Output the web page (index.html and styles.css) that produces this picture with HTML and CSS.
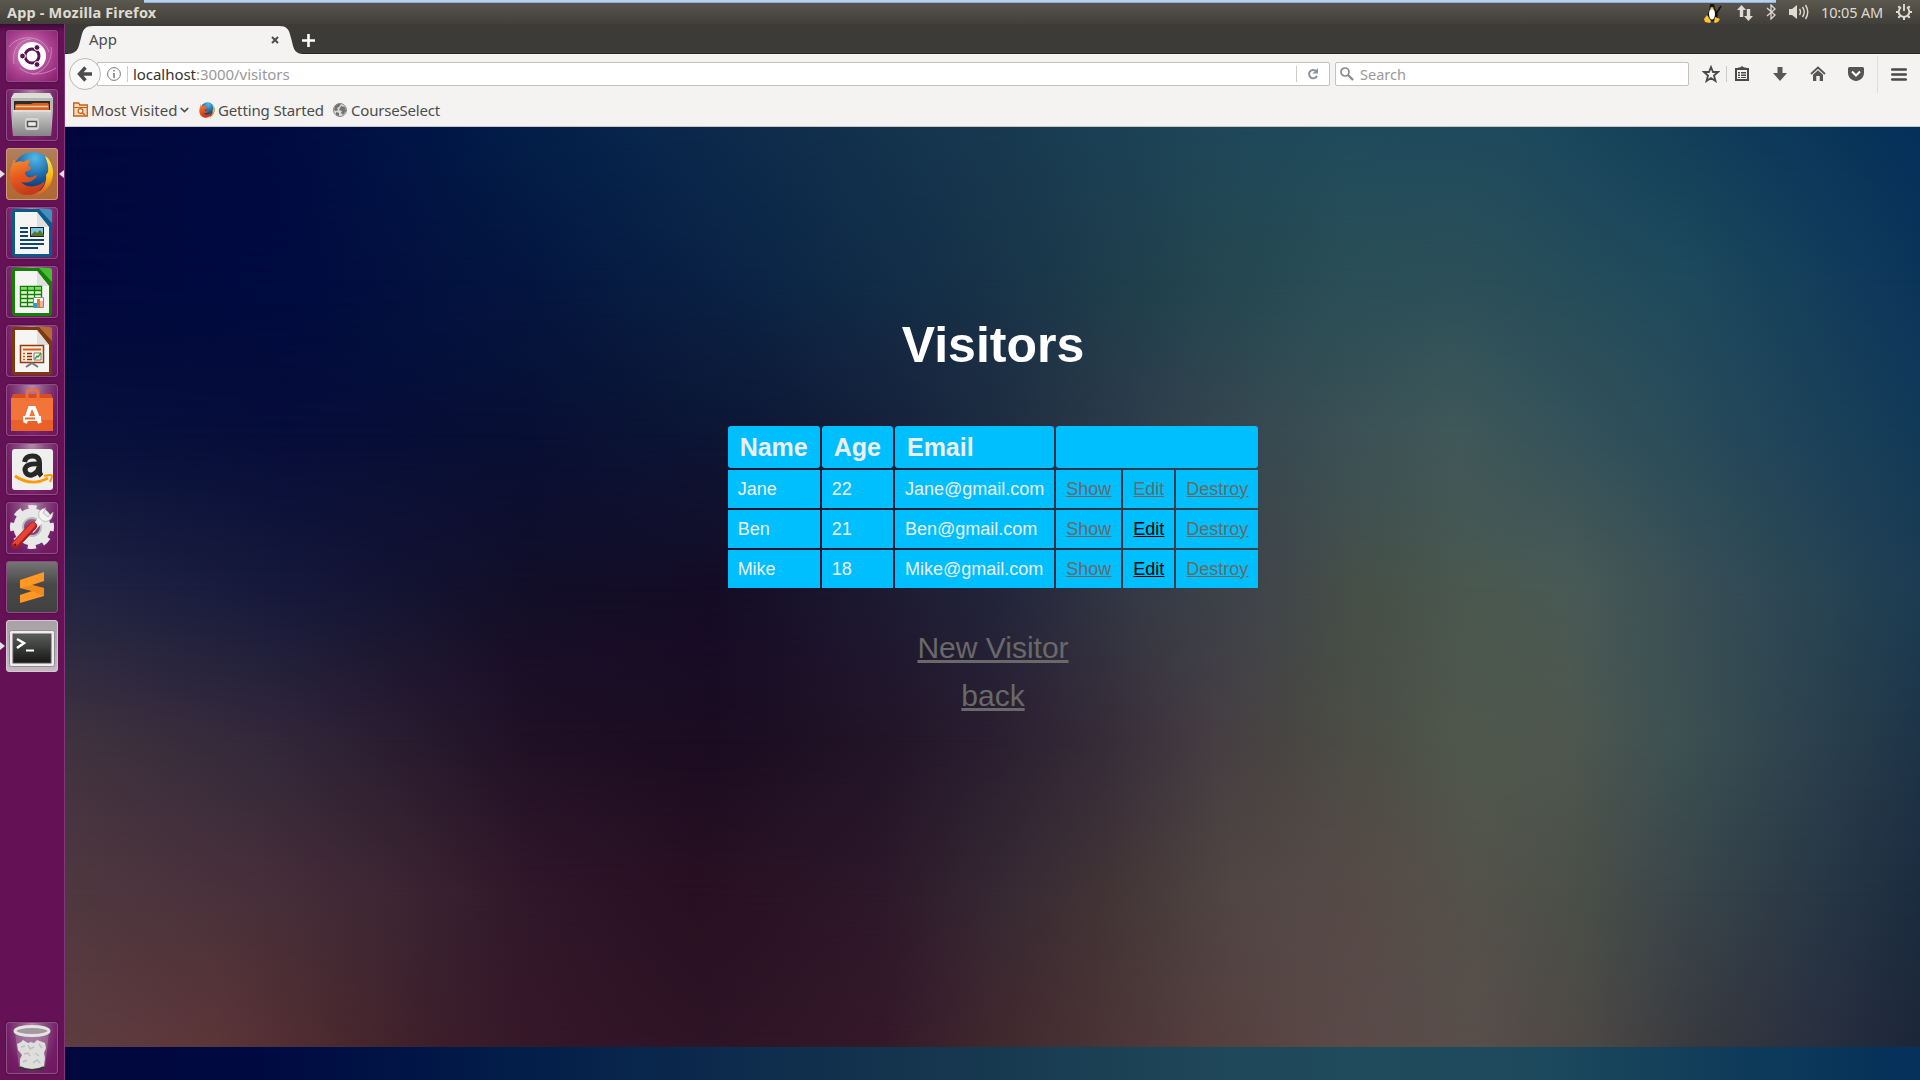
FILE: index.html
```html
<!DOCTYPE html>
<html lang="en">
<head>
<meta charset="utf-8">
<title>App</title>
<link rel="stylesheet" href="styles.css">
</head>
<body>
<div class="desktop">
  <header class="panel">
    <div class="panel-title">App - Mozilla Firefox</div>
    <div class="panel-strip"></div>
    <div class="indicators">
      <svg class="ind-tux" width="20" height="20" viewBox="0 0 18 20"><path d="M6 1h4l1 4 3 7-2 6H4l-1-5 2-5z" fill="#161616"/><ellipse cx="8" cy="11" rx="3" ry="5.500" fill="#fff"/><path d="M6 5l2-1 2 1-2 2zM0 16l3-4 4 6-1 2-5-1zM10 19l1-5 5 2-2 3-3 1z" fill="#fdc42c"/><path d="M12 11l5-8" stroke="#111" stroke-width="1.600"/></svg>
      <svg class="ind-net" width="16" height="16" viewBox="0 0 16 16" fill="#dfdbd2"><path d="M4.500 0L9 5H6.200v7H2.800V5H0zM11.500 16L7 11h2.800V4h3.400v7H16z"/></svg>
      <svg class="ind-bt" width="10" height="16" viewBox="0 0 10 16" fill="none" stroke="#dfdbd2" stroke-width="1.300"><path d="M1 4l8 7-4 4V1l4 4-8 7"/></svg>
      <svg class="ind-sound" width="20" height="16" viewBox="0 0 20 16"><path d="M0 5h3l5-4v14l-5-4H0z" fill="#dfdbd2"/><path d="M10.500 5q2 3 0 6M13.500 3q3.500 5 0 10M16.500 1q4.500 7 0 14" fill="none" stroke="#dfdbd2" stroke-width="1.400"/></svg>
      <span class="clock">10:05 AM</span>
      <svg class="ind-gear" width="16" height="16" viewBox="0 0 16 16" fill="none" stroke="#dfdbd2"><path d="M5 3.300a5.300 5.300 0 1 0 6 0" stroke-width="1.900"/><path d="M8 0v7" stroke-width="1.900"/><path d="M0 8h3M13 8h3M2.300 2.300l2 2M13.700 2.300l-2 2M2.300 13.700l2-2M13.700 13.700l-2-2M8 13v3" stroke-width="2"/></svg>
    </div>
  </header>

  <div class="workspace">
    <nav class="launcher">
      <div class="tile tile-dash"><svg width="52" height="52" viewBox="0 0 52 52"><g fill="none" stroke="#e7a9d9" stroke-width="1" opacity=".6"><path d="M3 17C12 4 37 4 43 22M45 17c2 12-6 26-19 27M8 34C6 20 12 10 25 9M14 38c10 9 24 7 36 0"/></g><circle cx="26" cy="26" r="14" fill="#fff"/><circle cx="26" cy="26" r="7" fill="none" stroke="#5a1453" stroke-width="3"/><path d="M26 26H18M26 26l5.500-9.500M26 26l5.500 9.500" stroke="#fff" stroke-width="0"/><path d="M31 13l-4 7M31 39l-4-7M13 26h8" stroke="#fff" stroke-width="0"/><g fill="#5a1453" stroke="#fff" stroke-width="1"><circle cx="16.500" cy="26" r="2.900"/><circle cx="31" cy="17.500" r="2.900"/><circle cx="31" cy="34.500" r="2.900"/></g></svg></div>
      <div class="tile"><svg width="52" height="52" viewBox="0 0 52 52"><defs><linearGradient id="cab" x2="0" y2="1"><stop stop-color="#d2d2d0"/><stop offset="1" stop-color="#858585"/></linearGradient></defs><path d="M8 4h36l3 5v13H5V9z" fill="#deded9"/><path d="M5 9h42v13l-2 25H7L5 22z" fill="#b8b8b5"/><path d="M8 12h36v11H8z" fill="#302a26"/><path d="M9 16l2-1h14l2-1h15l1 2v6H9z" fill="#d86027"/><path d="M10 17.500h32" stroke="#ffc891" stroke-width="1.500"/><path d="M7 21h38v26H7z" fill="url(#cab)"/><path d="M7 22h38" stroke="#ededed"/><rect x="19" y="29" width="14" height="12" rx="3" fill="#d6d6d4"/><rect x="21.500" y="32.500" width="9" height="5" fill="#eee" stroke="#555" stroke-width="1.500"/></svg></div>
      <div class="tile tile-firefox"><svg width="52" height="52" viewBox="0 0 52 52"><defs><linearGradient id="fox" x2=".3" y2="1"><stop stop-color="#f19632"/><stop offset=".5" stop-color="#e95a22"/><stop offset="1" stop-color="#c63b18"/></linearGradient><radialGradient id="globe" cx=".55" cy=".15" r=".9"><stop stop-color="#51bae8"/><stop offset=".6" stop-color="#14599c"/><stop offset="1" stop-color="#102555"/></radialGradient><linearGradient id="flame" x2=".1" y2="1"><stop stop-color="#fff06a"/><stop offset=".6" stop-color="#fdb813"/><stop offset="1" stop-color="#e85e1c"/></linearGradient></defs><circle cx="27" cy="24" r="20" fill="url(#globe)"/><path d="M39 8c5 3 9 11 8 19-1 11-9 19-18 20 8-5 12-12 11-20l2-3c1-6-1-11-3-16z" fill="url(#flame)"/><path d="M8 11l1 4c3-2 6-2 8-1l7-3-2 7 3 1-1 3-5 2c0 4 3 6 7 5l4-2c2 1 0 3-3 5-5 4-12 2-12 2 7 7 17 5 24-1-2 8-8 14-17 14C11 48 3 37 4 26c0-6 3-9 4-15z" fill="url(#fox)"/></svg></div>
      <div class="tile"><svg width="52" height="52" viewBox="0 0 52 52"><path d="M8 2h27l11 14v30q0 4-3 4H9q-3 0-3-4V4z" fill="#0b5a88"/><path d="M33 2h10q3 0 3 3v11z" fill="#3f91c2"/><path d="M9 5h22l12 15v27H9z" fill="#f5f5f4"/><path d="M31 5v15h12z" fill="#d5d5d5" opacity=".7"/><path d="M14 21h8M14 25h8M14 29h8M14 33h24M14 37h24M14 41h18" stroke="#10466d" stroke-width="2"/><rect x="24.500" y="20.500" width="13" height="9" fill="#79c5ed" stroke="#222"/><path d="M25 28l4-4 2 2 3-3 4 5v1H25z" fill="#57762b"/></svg></div>
      <div class="tile"><svg width="52" height="52" viewBox="0 0 52 52"><path d="M8 2h27l11 14v30q0 4-3 4H9q-3 0-3-4V4z" fill="#168006"/><path d="M33 2h10q3 0 3 3v11z" fill="#46bd32"/><path d="M9 5h22l12 15v27H9z" fill="#f5f5f4"/><path d="M31 5v15h12z" fill="#d5d5d5" opacity=".7"/><path d="M14.500 20.500h21v20h-21z" fill="#e7ffdd" stroke="#168006" stroke-width="1.400"/><path d="M15 21h20v3H15z" fill="#80dc6a"/><path d="M14 24.500h21M14 28.500h21M14 32.500h21M14 36.500h21M21.500 20v20M28.500 20v20" stroke="#168006" stroke-width="1.300"/><path d="M27.500 31.500h10v10h-10z" fill="#fff" stroke="#888"/><path d="M28 37h3v4h-3z" fill="#209ddb"/><path d="M31 33h3v8h-3z" fill="#ef7523"/><path d="M34 35h3v6h-3z" fill="#e9b890"/></svg></div>
      <div class="tile"><svg width="52" height="52" viewBox="0 0 52 52"><path d="M8 2h27l11 14v30q0 4-3 4H9q-3 0-3-4V4z" fill="#7e380d"/><path d="M33 2h10q3 0 3 3v11z" fill="#b36a35"/><path d="M9 5h22l12 15v27H9z" fill="#f5f5f4"/><path d="M31 5v15h12z" fill="#d5d5d5" opacity=".7"/><path d="M14.500 20.500h23v17h-23z" fill="#ffefe3" stroke="#943b0c" stroke-width="1.500"/><path d="M17 24.500h18" stroke="#d55b20" stroke-width="2"/><path d="M17 28.500h2M17 31.500h2M17 34.500h2" stroke="#d55b20" stroke-width="1.500"/><path d="M21 28.500h5M21 31.500h5M21 34.500h5" stroke="#7e380d" stroke-width="1.500"/><path d="M28 28h7v7h-7z" fill="#fff" stroke="#777"/><path d="M29 34l2-3 1 1 3-4" stroke="#3b9c20" stroke-width="1.400" fill="none"/><path d="M20 42l6-4 6 4" stroke="#777" stroke-width="2" fill="none"/></svg></div>
      <div class="tile"><svg width="52" height="52" viewBox="0 0 52 52"><path d="M7 10h38l2 5v32H5V15z" fill="#d64c23"/><path d="M5 14h42v33H5z" fill="#f27439"/><path d="M5 36h42v11H5z" fill="#e96129"/><path d="M21 17V9q0-3 3-3h5q3 0 3 3v8" fill="none" stroke="#e9703c" stroke-width="3"/><path d="M19 39l5-15h4l6 15" fill="none" stroke="#fff" stroke-width="4"/><path d="M17 32h18v5H17z" fill="#fff"/><path d="M19 34.500h10" stroke="#ed6832" stroke-width="2"/></svg></div>
      <div class="tile"><svg width="52" height="52" viewBox="0 0 52 52"><rect x="6" y="6" width="41" height="41" rx="3" fill="#efefee"/><path d="M18.500 19q1-6 8-6 7 0 7 7v8q0 3 2 5M33 21q-14-1-14 6 1 6 7 5 6-2 7-8" fill="none" stroke="#272727" stroke-width="5"/><path d="M9 33q16 11 33 2" fill="none" stroke="#f90" stroke-width="2.800"/><path d="M38 33q8-2 8 0t-2 6" fill="none" stroke="#f90" stroke-width="2"/></svg></div>
      <div class="tile"><svg width="52" height="52" viewBox="0 0 52 52"><circle cx="26" cy="25" r="14" fill="none" stroke="#e8e8e8" stroke-width="9"/><circle cx="26" cy="25" r="19.500" fill="none" stroke="#e8e8e8" stroke-width="5" stroke-dasharray="8 7.315" transform="rotate(-12 26 25)"/><circle cx="26" cy="25" r="9" fill="none" stroke="#bbb" stroke-width="2"/><path d="M25 29l13-15" stroke="#f3f3f3" stroke-width="6"/><path d="M40 6q-9 1-7 9 3 6 9 4 5-2 5-9l-5 5-5-4z" fill="#f4f4f4" stroke="#aaa" stroke-width=".7"/><path d="M9 43l18-19" stroke="#a71d1d" stroke-width="8" stroke-linecap="round"/><path d="M9 42l18-19" stroke="#e84239" stroke-width="5" stroke-linecap="round"/><circle cx="9" cy="43" r="1.500" fill="#701519"/></svg></div>
      <div class="tile tile-sublime"><svg width="52" height="52" viewBox="0 0 52 52"><path d="M14 19l24-8v9l-12 4 12 3v8l-24 7v-8l12-4-12-3z" fill="#ff9824"/><path d="M14 27l12-3 12 3v8l-12-5z" fill="#e88016" opacity=".6"/></svg></div>
      <div class="tile tile-terminal"><svg width="52" height="52" viewBox="0 0 52 52"><defs><linearGradient id="term" x2="0" y2="1"><stop stop-color="#5b5d5a"/><stop offset=".45" stop-color="#3c3e3b"/><stop offset="1" stop-color="#161716"/></linearGradient></defs><rect x="3.500" y="10.500" width="45" height="36" rx="2" fill="#eee" stroke="#8e8e8c"/><rect x="7" y="14" width="38" height="29" fill="url(#term)" stroke="#555"/><path d="M11 19l7 4-7 5" fill="none" stroke="#fff" stroke-width="2.500"/><path d="M20 30.500h8" stroke="#fff" stroke-width="2"/></svg></div>
      <div class="tile tile-trash"><svg width="52" height="52" viewBox="0 0 52 52"><path d="M9 10l4 35q13 5 26 0l4-35z" fill="#c7a8c2" opacity=".35"/><ellipse cx="26" cy="46" rx="13" ry="2.500" fill="#353b35"/><path d="M11 22l4-2 2-2 5 3 3-1 3 1 3-3 8 3 1 5-2 5 1 5-1 8q-12 6-24 0l0-7 2-4-4-5z" fill="#dededd"/><path d="M15 25l4-1M22 23l2 4 4-2M33 22l3 4M18 32l4-1 2 3M29 31l4 3M17 40l4-2M27 41l4-3 3 3" fill="none" stroke="#bebfbc" stroke-width="1.400"/><ellipse cx="26" cy="9" rx="17" ry="4.500" fill="#a398a0" stroke="#e3e5e0" stroke-width="3"/></svg></div>
      <svg class="pip pip-firefox" width="5" height="8" viewBox="0 0 5 8"><path d="M0 0l5 4-5 4z"/></svg>
      <svg class="pip pip-focus" width="5" height="8" viewBox="0 0 5 8"><path d="M5 0L0 4l5 4z"/></svg>
      <svg class="pip pip-terminal" width="5" height="8" viewBox="0 0 5 8"><path d="M0 0l5 4-5 4z"/></svg>
    </nav>

    <section class="browser">
      <div class="tabstrip">
        <div class="tab">
          <svg class="tab-shape" width="240" height="30" viewBox="0 0 240 30"><path d="M0 30C14 30 13 24 16 14 18 5 20 2 28 2H214C222 2 224 5 226 14 229 24 228 30 240 30z" fill="#f4f3f2"/></svg>
          <span class="tab-label">App</span>
          <svg class="tab-close" width="8" height="8" viewBox="0 0 8 8"><path d="M1 1l6 6M7 1L1 7" stroke="#4c4c4c" stroke-width="2"/></svg>
        </div>
        <svg class="newtab" width="13" height="13" viewBox="0 0 13 13"><path d="M6.500 0v13M0 6.500h13" stroke="#fff" stroke-width="2.600"/></svg>
      </div>
      <div class="navbar">
        <div class="back"><svg width="16" height="16" viewBox="0 0 16 16"><path d="M8.500 1.500L2.500 8l6 6.500M3 8h12" fill="none" stroke="#4c4c4c" stroke-width="3.400"/></svg></div>
        <div class="urlbar">
          <svg class="info" width="14" height="14" viewBox="0 0 14 14"><circle cx="7" cy="7" r="6.400" fill="none" stroke="#777"/><path d="M7 6v5M7 3v1.600" stroke="#777" stroke-width="1.500"/></svg>
          <span class="url">localhost<span class="path">:3000/visitors</span></span>
          <span class="reload"><svg width="12" height="12" viewBox="0 0 12 12"><path d="M9.300 3.200A4.200 4.200 0 1 0 10 8" fill="none" stroke="#8793a0" stroke-width="2"/><path d="M11 0v5.500H5.500z" fill="#8793a0"/></svg></span>
        </div>
        <div class="searchbar"><svg width="14" height="14" viewBox="0 0 14 14"><circle cx="5" cy="5" r="4" fill="none" stroke="#888" stroke-width="1.700"/><path d="M8 8l5 5" stroke="#888" stroke-width="2.300"/></svg><span>Search</span></div>
        <div class="tools">
          <svg class="t-star" width="18" height="18" viewBox="0 0 18 18"><path d="M9 2l2 5h5l-4 3.500 1.500 5.500L9 13l-4.500 3L6 10.500 2 7h5z" fill="none" stroke="#4a4a4a" stroke-width="1.800"/></svg>
          <svg class="t-list" width="16" height="16" viewBox="0 0 16 16"><path d="M2 3h12v11H2z" fill="none" stroke="#4a4a4a" stroke-width="2"/><path d="M4 1.500h2L8 0l2 1.500h2V4H4zM4 6h2v1.500H4zM7 6h5v1.500H7zM4 8.500h2V10H4zM7 8.500h5V10H7zM4 11h2v1H4zM7 11h5v1H7z" fill="#4a4a4a"/></svg>
          <svg class="t-down" width="14" height="14" viewBox="0 0 14 14"><path d="M4.500 0h5v6H14l-7 8-7-8h4.500z" fill="#585858"/></svg>
          <svg class="t-home" width="16" height="16" viewBox="0 0 16 16"><path d="M1 8l7-6.500L15 8" fill="none" stroke="#555" stroke-width="1.800"/><path d="M8 4.200l5 4.600V15H9.700v-5H6.300v5H3V8.800z" fill="#555"/></svg>
          <svg class="t-pocket" width="16" height="14" viewBox="0 0 16 14"><path d="M1.500 0h13Q16 0 16 1.500V6q0 5-5 7.200Q8 14.700 5 13.200 0 11 0 6V1.500Q0 0 1.500 0z" fill="#555"/><path d="M4 4.500l4 4 4-4" fill="none" stroke="#fff" stroke-width="2"/></svg>
          <svg class="t-menu" width="16" height="13" viewBox="0 0 16 13"><path d="M1.200 1.500h13.600M1.200 6.500h13.600M1.200 11.500h13.600" stroke="#4a4a4a" stroke-width="2.600" stroke-linecap="round"/></svg>
        </div>
      </div>
      <div class="bookmarks">
        <svg class="b-folder" width="15" height="15" viewBox="0 0 15 15"><path d="M.700 14V1h5l1 2h7.600v11z" fill="#fbdcbc" stroke="#cb5c13" stroke-width="1.300"/><path d="M1 5.500h13" fill="none" stroke="#cb5c13"/><circle cx="7.500" cy="9" r="2.400" fill="#fff" stroke="#cb5c13" stroke-width="1.200"/><path d="M9.500 11l2.500 2" stroke="#cb5c13" stroke-width="1.400"/></svg>
        <span class="b-visited">Most Visited</span>
        <svg class="b-caret" width="9" height="6" viewBox="0 0 9 6"><path d="M.800 1l3.700 3.600L8.200 1" fill="none" stroke="#4c4c4c" stroke-width="1.700"/></svg>
        <svg class="b-fox" width="16" height="16" viewBox="3 3 45 45"><circle cx="27" cy="24" r="20" fill="url(#globe)"/><path d="M39 8c5 3 9 11 8 19-1 11-9 19-18 20 10-7 14-15 12-20l2-3c1-6-1-11-4-16z" fill="url(#flame)"/><path d="M8 7l1 8c3-2 6-2 8-1l7-3-2 7 3 1-1 3-5 2c0 4 3 6 7 5l4-2c2 1 0 3-3 5-5 4-12 2-12 2 7 7 17 5 22-1-1 8-7 14-15 14C11 48 3 37 4 26c0-6 3-9 4-19z" fill="url(#fox)"/></svg>
        <span class="b-start">Getting Started</span>
        <svg class="b-globe" width="14" height="14" viewBox="0 0 14 14"><circle cx="7" cy="7" r="6.500" fill="#d9d9d9" stroke="#858585"/><path d="M2 3q3-3 6-2L6 4 4 5l1 2-2 1-2-1zM8 3l4 1 1 4-3 4-2-2 1-2-3-1zM3 9l3 1 0 3-3-1z" fill="#737373"/></svg>
        <span class="b-course">CourseSelect</span>
      </div>

      <main class="page">
        <div class="backdrop">
          <div class="band band-1"></div><div class="band band-2"></div><div class="band band-3"></div><div class="band band-4"></div><div class="band band-5"></div><div class="band band-6"></div><div class="band band-7"></div>
          <div class="band-repeat"></div>
        </div>
        <h1>Visitors</h1>
        <table>
          <thead><tr><th>Name</th><th>Age</th><th>Email</th><th colspan="3"></th></tr></thead>
          <tbody>
            <tr><td>Jane</td><td>22</td><td>Jane@gmail.com</td><td><a>Show</a></td><td><a>Edit</a></td><td><a>Destroy</a></td></tr>
            <tr><td>Ben</td><td>21</td><td>Ben@gmail.com</td><td><a>Show</a></td><td><a class="fresh">Edit</a></td><td><a>Destroy</a></td></tr>
            <tr><td>Mike</td><td>18</td><td>Mike@gmail.com</td><td><a>Show</a></td><td><a class="fresh">Edit</a></td><td><a>Destroy</a></td></tr>
          </tbody>
        </table>
        <div class="links"><a>New Visitor</a><a>back</a></div>
      </main>
    </section>
  </div>
</div>
</body>
</html>
```
FILE: styles.css
```css
* { box-sizing: border-box; }
body { margin: 0; font-family: "Noto Sans", "Open Sans", sans-serif; overflow: hidden; }
svg { display: block; flex: none; }
.desktop { width: 1920px; height: 1080px; display: flex; flex-direction: column; }

/* Top panel */
.panel { position: relative; height: 24px; display: flex; align-items: center; justify-content: space-between; padding: 0 8px 0 7px; background: linear-gradient(#5b584e, #413f39); color: #dfdbd2; flex: none; }
.panel-title { font-size: 14.500px; font-weight: 700; line-height: 24px; white-space: nowrap; letter-spacing: .18px; }
.panel-strip { position: absolute; left: 144px; top: 0; width: 1632px; height: 3px; background: #b9d0ee; border-bottom: 1px solid #8fb0dd; }
.indicators { display: flex; align-items: center; height: 24px; }
.ind-tux { margin: 1px 14px 0 0; }
.ind-net { margin: 1px 13px 0 0; }
.ind-bt { margin-right: 13px; }
.ind-sound { margin-right: 12px; }
.clock { width: 62px; margin-right: 13px; font-size: 14.500px; letter-spacing: -.15px; line-height: 22px; padding-bottom: 1px; white-space: nowrap; }

.workspace { flex: 1; display: flex; min-height: 0; }

/* Launcher */
.launcher { position: relative; width: 65px; flex: none; display: flex; flex-direction: column; gap: 7px; padding: 6px 0 6px 6px; background: linear-gradient(#3b0b35 0, #651155 8px); border-right: 1px solid #82377a; }
.tile { width: 52px; height: 52px; flex: none; border-radius: 4px; background: radial-gradient(ellipse at 50% 0, #b48aae 0, #8a4c80 35%, #741d67 70%, #6c165d); box-shadow: inset 0 0 0 1px #8b5081, 0 0 2px #430b3c; }
.tile-dash { background: radial-gradient(circle at 45% 45%, #d896c8, #a9428e 55%, #87166f); }
.tile-firefox { background: linear-gradient(#b08062, #b3703a 50%, #ae6937); box-shadow: inset 0 0 0 1px #cf9a72; }
.tile-sublime { background: linear-gradient(#777, #484848 45%, #414141); }
.tile-terminal { background: linear-gradient(#a7a0a7, #c5b9c3); box-shadow: inset 0 0 0 1px #d5cad3; }
.tile-trash { margin-top: auto; }
.pip { position: absolute; fill: #e3dfe2; }
.pip-firefox { left: 0; top: 146px; }
.pip-focus { right: 0; top: 146px; }
.pip-terminal { left: 0; top: 618px; }

/* Browser chrome */
.browser { flex: 1; display: flex; flex-direction: column; min-width: 0; color: #4c4c4c; }
.tabstrip { height: 30px; flex: none; display: flex; align-items: center; background: #3c3b37; box-shadow: inset 0 -1px #282724; }
.tab { position: relative; width: 237px; height: 30px; display: flex; align-items: center; justify-content: space-between; padding: 0 22px 0 24px; font-size: 15px; }
.tab-shape { position: absolute; left: 0; top: 0; }
.tab-label, .tab-close { position: relative; }
.tab-close { margin: 2px 1px 0 0; }
.newtab { margin: 2px 0 0 0; }
.navbar { height: 42px; flex: none; display: flex; align-items: center; padding-left: 4px; background: #f4f3f2; }
.back { position: relative; z-index: 1; width: 32px; height: 32px; margin-top: -2px; flex: none; border: 1px solid #bbb9b6; border-radius: 50%; background: #f9f9f9; display: flex; align-items: center; justify-content: center; }
.urlbar { width: 1233px; height: 24px; margin: -2px 6px 0 -4px; flex: none; display: flex; align-items: center; padding-left: 9px; background: #fff; border: 1px solid #c2c1be; border-radius: 0 2px 2px 0; }
.url { flex: 1; height: 16px; margin-left: 6px; padding-left: 5px; border-left: 1px solid #ccc; line-height: 16px; font-size: 15px; letter-spacing: -.05px; color: #333; }
.path { color: #999; }
.reload { width: 33px; height: 16px; border-left: 1px solid #ccc; display: flex; align-items: center; justify-content: center; }
.searchbar { width: 354px; height: 24px; margin: -2px 0 0 -1px; flex: none; display: flex; align-items: center; gap: 6px; padding-left: 4px; background: #fff; border: 1px solid #c2c1be; border-radius: 2px; color: #999; font-size: 14.500px; line-height: 20px; }
.tools { flex: 1; height: 42px; display: flex; align-items: center; margin-top: -2px; padding-left: 13px; }
.t-star { margin-right: 6px; }
.t-list { box-sizing: content-box; padding-left: 7px; border-left: 1px solid #ccc; margin-right: 23px; }
.t-down { margin-right: 23px; }
.t-home { margin-right: 22px; }
.t-pocket { margin-right: 13px; }
.t-menu { box-sizing: content-box; padding: 12px 0 12px 13px; border-left: 1px solid #ddd; }
.bookmarks { height: 31px; flex: none; display: flex; align-items: center; padding: 0 0 3px 8px; background: #f4f3f2; border-bottom: 1px solid #c8c7c3; font-size: 15px; line-height: 20px; white-space: nowrap; }
.b-visited { width: 87px; margin-left: 3px; letter-spacing: .02px; }
.b-caret { margin: 0 10px 0 2px; }
.b-start { width: 107px; margin: 0 8px 0 3px; letter-spacing: -.13px; }
.b-course { margin-left: 4px; letter-spacing: -.2px; }

/* Page */
.page { position: relative; flex: 1; display: flex; flex-direction: column; align-items: center; padding-left: 1px; overflow: hidden; font-family: "Liberation Sans", Arial, sans-serif; }
.backdrop, .band { position: absolute; inset: 0; }
.band { bottom: auto; height: 920px; }
.band-1, .band-repeat { background: linear-gradient(90deg, #00073c, #000a41 10%, #001144 16%, #04204a 26%, #0d2b4c 36%, #17394f 50%, #1e4658 61%, #204b5c 69%, #1f4a5d 78%, #133f5a 87%, #04305a); }
.band-repeat { position: absolute; left: 0; right: 0; top: 920px; height: 33px; }
.band-2 { background: linear-gradient(90deg, #00073d, #000b40 12%, #04163f 25%, #0b2446 37%, #183348 50%, #24464f 62%, #2a4e56 69%, #2c4f58 75%, #1f4a5c 87%, #0c345a); -webkit-mask: linear-gradient(transparent, #000 153px); }
.band-3 { background: linear-gradient(90deg, #07103b, #060d39 12%, #080f34 25%, #0e1734 37%, #16203a 44%, #1e2b40 50%, #2b3848 56%, #36454f 62%, #3b5055 69%, #405859 75%, #2a4c5a 87%, #123a58); -webkit-mask: linear-gradient(transparent 153px, #000 307px); }
.band-4 { background: linear-gradient(90deg, #202442, #15183a 12%, #120e28 25%, #140c26 35%, #22243a 50%, #363a46 58%, #40444a 64%, #465048 70%, #4a5850 76%, #4a5a55 81%, #384e55 88%, #1c3c52); -webkit-mask: linear-gradient(transparent 307px, #000 460px); }
.band-5 { background: linear-gradient(90deg, #40333e, #32283a 11%, #201025 25%, #1b0c21 35%, #221427 44%, #2a1e30 50%, #362c38 56%, #453e42 62%, #4b4c44 69%, #50584c 76%, #4e574f 81%, #3a4f52 88%, #1e3448); -webkit-mask: linear-gradient(transparent 460px, #000 613px); }
.band-6 { background: linear-gradient(90deg, #503840, #48303a 10%, #3c2632 18%, #30172a 25%, #281022 34%, #2c182a 44%, #352832 50%, #423436 56%, #514644 63%, #574b47 70%, #53524a 76%, #4c5048 81%, #38444a 88%, #1c2c40); -webkit-mask: linear-gradient(transparent 613px, #000 767px); }
.band-7 { background: linear-gradient(90deg, #5e3d40, #5c3638 8%, #4c2a30 14%, #3c1e2a 20%, #341628 27%, #2e1426 35%, #351829 44%, #41282e 50%, #4a3436 56%, #54403e 62%, #5a4a48 69%, #584e4a 76%, #4c4845 82%, #38393f 88%, #2a3040 94%, #1c2638); -webkit-mask: linear-gradient(transparent 767px, #000 920px); }
h1 { position: relative; margin: 188px 0 0; font-size: 50px; line-height: 60px; color: #fff; }
table { position: relative; width: 534px; margin-top: 49px; border-collapse: separate; border-spacing: 2px; color: #eee; }
th { height: 42px; padding: 0 12px; border-radius: 3px; background: #00bfff; font-size: 25px; line-height: 28px; text-align: left; }
td { height: 38px; padding: 0 10px; background: #00bfff; font-size: 18px; line-height: 20px; }
a { color: #696969; text-decoration: underline; }
.fresh { color: #000; }
.links { position: relative; margin-top: 34px; display: flex; flex-direction: column; align-items: center; font-size: 30px; line-height: 48px; }
```
